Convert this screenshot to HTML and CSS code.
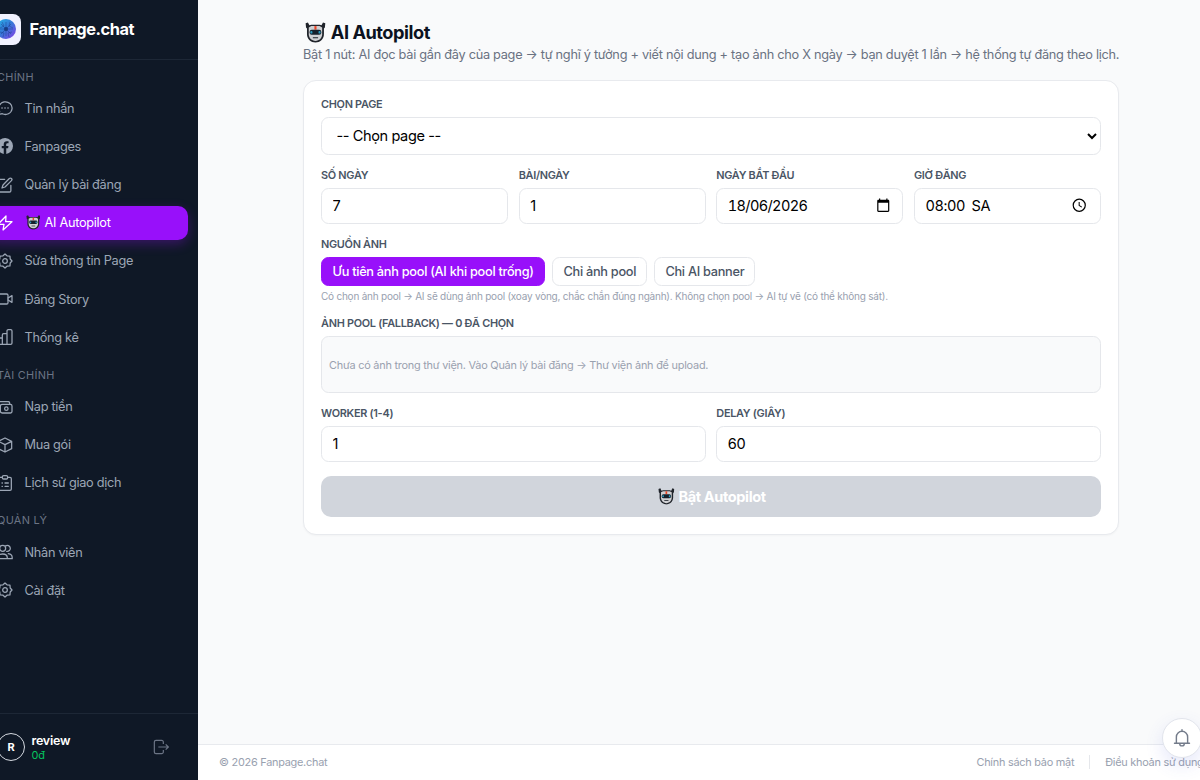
FILE: index.html
```html
<!DOCTYPE html>
<html lang="vi">
<head>
    <meta charset="UTF-8">
    <meta name="viewport" content="width=device-width, initial-scale=1.0">
    <title>AI Autopilot - Fanpage.chat</title>
    <link rel="stylesheet" href="styles.css">
</head>
<body>
    <svg class="sprite" width="0" height="0">
        <symbol id="robot" viewBox="0 0 20 20">
            <path d="M.6 1.200 2.800.4l1.400 2.800L6 2.600h8l1.800.6L17.200.4l2.200.8-.4 4-.9 1v5.600c0 4.500-3.800 7.900-8.100 7.900s-8.100-3.400-8.100-7.900V6.200l-.9-1z" fill="#20242b"/>
            <path d="M3.600 5.200 6 3.900h8l2.400 1.300v6.600c0 3.600-2.800 6.300-6.400 6.300s-6.400-2.700-6.400-6.300z" fill="#cfd0d3"/>
            <path d="M9 3.900h2v3.400H9z" fill="#ef4423"/>
            <rect x="4.400" y="7.500" width="11.200" height="4.800" rx="2" fill="#16212c"/>
            <rect x="5.100" y="8.700" width="2" height="2.400" rx=".8" fill="#2b9cc0"/>
            <rect x="12.900" y="8.700" width="2" height="2.400" rx=".8" fill="#2b9cc0"/>
            <path d="M7.500 15h5" stroke="#41464e" stroke-width="1.200"/>
        </symbol>
        <symbol id="gear" viewBox="0 0 24 24">
            <path d="m12 1.500 3 2.700 4.400.4.400 4.400 2.700 3-2.700 3-.4 4.400-4.400.4-3 2.700-3-2.700-4.400-.4-.4-4.400-2.700-3 2.700-3 .4-4.400L9 4.200z"/>
            <circle cx="12" cy="12" r="3.500"/>
        </symbol>
    </svg>

    <div class="app">
        <aside class="sidebar">
            <div class="brand">
                <div class="brand-logo">
                    <svg viewBox="0 0 20 20">
                        <defs>
                            <linearGradient id="globe" x1="0" y1="0" x2="1" y2="1">
                                <stop offset="0" stop-color="#25b5e8"/>
                                <stop offset=".5" stop-color="#3777d8"/>
                                <stop offset="1" stop-color="#8a3ee8"/>
                            </linearGradient>
                        </defs>
                        <circle cx="10" cy="10" r="10" fill="url(#globe)"/>
                        <path d="M10 3v14M3 10h14M5 5l10 10M15 5 5 15M6 3l2 4-4 2M14 3l-1 4 4 2M4 13l4 1-1 4M16 13l-4 1 1 4" stroke="#1b3f8f" stroke-width=".8" fill="none" opacity=".6"/>
                        <circle cx="10" cy="10" r="2" fill="#173d85"/>
                    </svg>
                </div>
                <span class="brand-name">Fanpage.chat</span>
            </div>

            <nav class="menu">
                <div class="menu-title">CHÍNH</div>
                <a href="#" class="menu-item">
                    <svg viewBox="0 0 24 24"><path d="M3 21.500 4 17A10 9.500 0 1 1 8 20.600z"/><path d="M7.500 12h.1M12 12h.1M16.500 12h.1" stroke-width="2.400"/></svg>
                    <span>Tin nhắn</span>
                </a>
                <a href="#" class="menu-item">
                    <svg viewBox="0 0 24 24"><path class="solid" d="M24 12a12 12 0 1 0-13.900 11.900v-8.400h-3V12h3V9.400c0-3 1.800-4.700 4.500-4.700 1.300 0 2.700.2 2.700.2v3h-1.500c-1.500 0-2 .9-2 1.900V12h3.400l-.5 3.500h-2.800v8.400A12 12 0 0 0 24 12z"/></svg>
                    <span>Fanpages</span>
                </a>
                <a href="#" class="menu-item">
                    <svg viewBox="0 0 24 24"><path d="M11.500 3.500H3.800A2 2 0 0 0 1.800 5.500v15a2 2 0 0 0 2 2h15a2 2 0 0 0 2-2v-8"/><path d="M18.500 2.200a2.200 2.200 0 0 1 3.200 3.200L12 15l-4.500 1.500L9 12z"/></svg>
                    <span>Quản lý bài đăng</span>
                </a>
                <a href="#" class="menu-item active">
                    <svg viewBox="0 0 24 24"><path d="M13.500 1.500 1.500 14h9l-1.500 8.500L22.500 10h-9.500z"/></svg>
                    <span><svg class="robot"><use href="#robot"/></svg> AI Autopilot</span>
                </a>
                <a href="#" class="menu-item">
                    <svg viewBox="0 0 24 24"><use href="#gear"/></svg>
                    <span>Sửa thông tin Page</span>
                </a>
                <a href="#" class="menu-item">
                    <svg viewBox="0 0 24 24"><rect x="0" y="4.500" width="16.500" height="15" rx="2"/><path d="m16.500 10.500 6-3.500v10l-6-3.500"/></svg>
                    <span>Đăng Story</span>
                </a>
                <a href="#" class="menu-item">
                    <svg viewBox="0 0 24 24"><path d="M1 13.500h7V23H1zM8 9a2 2 0 0 1 2-2h5v16H8zM15 3a2 2 0 0 1 2-2h3.500a2 2 0 0 1 2 2v18a2 2 0 0 1-2 2H15z"/></svg>
                    <span>Thống kê</span>
                </a>

                <div class="menu-title">TÀI CHÍNH</div>
                <a href="#" class="menu-item">
                    <svg viewBox="0 0 24 24"><path d="M17 4H2a2 2 0 0 0-2 2v8a2 2 0 0 0 2 2h3M5 16v-5a3 3 0 0 1 3-3h12a2.500 2.500 0 0 1 2.500 2.500v8A2.500 2.500 0 0 1 20 21H8a3 3 0 0 1-3-3z"/><circle cx="14" cy="14.500" r="2.600"/><path d="M17 4a2 2 0 0 1 2 2v2"/></svg>
                    <span>Nạp tiền</span>
                </a>
                <a href="#" class="menu-item">
                    <svg viewBox="0 0 24 24"><path d="m12 1.500 10 5v11l-10 5-10-5v-11zM2 6.500l10 5 10-5M12 11.500v11"/></svg>
                    <span>Mua gói</span>
                </a>
                <a href="#" class="menu-item">
                    <svg viewBox="0 0 24 24"><path d="M8 3.500H4.500a2 2 0 0 0-2 2V21a2 2 0 0 0 2 2h15a2 2 0 0 0 2-2V5.500a2 2 0 0 0-2-2H16"/><rect x="8" y="1" width="8" height="5" rx="2"/><path d="M7.500 12h.6M12 12h5M7.500 17h.6M12 17h5"/></svg>
                    <span>Lịch sử giao dịch</span>
                </a>

                <div class="menu-title">QUẢN LÝ</div>
                <a href="#" class="menu-item">
                    <svg viewBox="0 0 24 24"><circle cx="8.500" cy="6.500" r="4.500"/><path d="M13 2.800a4.500 4.500 0 1 1 1.500 8.200M1 22v-1c0-4 3-6 7.500-6s7 2 7 6v1zM17 14.500c3.500.5 5.800 2.500 5.800 6V22h-7"/></svg>
                    <span>Nhân viên</span>
                </a>
                <a href="#" class="menu-item">
                    <svg viewBox="0 0 24 24"><use href="#gear"/></svg>
                    <span>Cài đặt</span>
                </a>
            </nav>

            <div class="account">
                <div class="avatar">R</div>
                <div class="account-info">
                    <div class="account-name">review</div>
                    <div class="account-balance">0đ</div>
                </div>
                <svg class="logout" viewBox="0 0 24 24"><path d="M15.500 7.500V4.500a2.500 2.500 0 0 0-2.500-2.500H4.500A2.500 2.500 0 0 0 2 4.500v15A2.500 2.500 0 0 0 4.500 22H13a2.500 2.500 0 0 0 2.500-2.500v-3M8 12h14.500M19 8l4 4-4 4"/></svg>
            </div>
        </aside>

        <div class="main">
            <main class="content">
                <h1><svg class="robot"><use href="#robot"/></svg> AI Autopilot</h1>
                <p class="subtitle">Bật 1 nút: AI đọc bài gần đây của page → tự nghĩ ý tưởng + viết nội dung + tạo ảnh cho X ngày → bạn duyệt 1 lần → hệ thống tự đăng theo lịch.</p>

                <form class="card">
                    <div class="field">
                        <label for="page">CHỌN PAGE</label>
                        <select id="page">
                            <option>-- Chọn page --</option>
                        </select>
                    </div>

                    <div class="row four">
                        <div class="field">
                            <label for="days">SỐ NGÀY</label>
                            <input type="text" id="days" value="7">
                        </div>
                        <div class="field">
                            <label for="posts">BÀI/NGÀY</label>
                            <input type="text" id="posts" value="1">
                        </div>
                        <div class="field">
                            <label for="start">NGÀY BẮT ĐẦU</label>
                            <div class="picker">
                                <input type="text" id="start" value="18/06/2026">
                                <svg viewBox="0 0 24 24"><path d="M20 3h-1V1h-2v2H7V1H5v2H4c-1.100 0-2 .9-2 2v16c0 1.100.9 2 2 2h16c1.100 0 2-.9 2-2V5c0-1.100-.9-2-2-2zm0 18H4V8h16v13z"/></svg>
                            </div>
                        </div>
                        <div class="field">
                            <label for="time">GIỜ ĐĂNG</label>
                            <div class="picker time">
                                <input type="text" id="time" value="08:00 SA">
                                <svg viewBox="0 0 24 24"><path d="M12 1a11 11 0 1 0 0 22 11 11 0 0 0 0-22zm0 20a9 9 0 1 1 0-18 9 9 0 0 1 0 18zM12.700 6.500H11v6.200l4.800 3 .9-1.400-4-2.400z"/></svg>
                            </div>
                        </div>
                    </div>

                    <div class="field">
                        <label>NGUỒN ẢNH</label>
                        <div class="options">
                            <button type="button" class="option selected">Ưu tiên ảnh pool (AI khi pool trống)</button>
                            <button type="button" class="option">Chỉ ảnh pool</button>
                            <button type="button" class="option">Chỉ AI banner</button>
                        </div>
                        <p class="hint">Có chọn ảnh pool → AI sẽ dùng ảnh pool (xoay vòng, chắc chắn đúng ngành). Không chọn pool → AI tự vẽ (có thể không sát).</p>
                    </div>

                    <div class="field">
                        <label>ẢNH POOL (FALLBACK) — 0 ĐÃ CHỌN</label>
                        <div class="pool">Chưa có ảnh trong thư viện. Vào Quản lý bài đăng → Thư viện ảnh để upload.</div>
                    </div>

                    <div class="row two">
                        <div class="field">
                            <label for="worker">WORKER (1-4)</label>
                            <input type="text" id="worker" value="1">
                        </div>
                        <div class="field">
                            <label for="delay">DELAY (GIÂY)</label>
                            <input type="text" id="delay" value="60">
                        </div>
                    </div>

                    <button type="submit" class="submit-btn" disabled><svg class="robot"><use href="#robot"/></svg> Bật Autopilot</button>
                </form>
            </main>

            <footer class="footer">
                <span>© 2026 Fanpage.chat</span>
                <div class="footer-links">
                    <a href="#">Chính sách bảo mật</a>
                    <a href="#">Điều khoản sử dụng</a>
                </div>
            </footer>
        </div>
    </div>

    <button class="bell">
        <svg viewBox="0 0 24 24"><path d="M2 19h20M4.500 19v-8.500a7.500 7.500 0 0 1 15 0V19M12 3V1M9 19.500a3 3 0 0 0 6 0"/></svg>
    </button>
</body>
</html>
```
FILE: styles.css
```css
* {
    margin: 0;
    padding: 0;
    box-sizing: border-box;
}

body {
    font-family: Inter, "Noto Sans", sans-serif;
    background: #f9fafb;
    height: 100vh;
    overflow: hidden;
}

a {
    color: inherit;
    text-decoration: none;
}

button, input, select {
    font-family: inherit;
}

.sprite {
    position: absolute;
}

/* the shell is wider than the window and starts left of it */
.app {
    display: flex;
    width: 1248px;
    height: 780px;
    margin-left: -24px;
}

.sidebar {
    width: 222px;
    flex-shrink: 0;
    background: #0f1826;
    display: flex;
    flex-direction: column;
}

.brand {
    height: 59.5px;
    padding: 0 14px;
    border-bottom: 1px solid #1d2736;
    display: flex;
    align-items: center;
    gap: 8.5px;
    flex-shrink: 0;
}

.brand-logo {
    width: 31px;
    height: 31px;
    border-radius: 8px;
    background: #f1f2ff;
    display: flex;
    align-items: center;
    justify-content: center;
}

.brand-logo svg {
    width: 20px;
    height: 20px;
}

.brand-name {
    color: #fff;
    font-size: 16.4px;
    font-weight: 700;
    letter-spacing: -0.028em;
}

.menu {
    flex: 1;
    padding: 0 10.5px;
}

.menu-title {
    height: 31.6px;
    padding: 9px 10.5px 0;
    color: #6b7485;
    font-size: 10.9px;
    line-height: 16px;
    letter-spacing: 0.3px;
}

.menu-item + .menu-title {
    height: 31px;
    padding-top: 8.5px;
}

.menu-item {
    height: 34.2px;
    margin-bottom: 4px;
    padding: 0 10.5px;
    border-radius: 10px;
    display: flex;
    align-items: center;
    gap: 11.5px;
    color: #9ca6b5;
    font-size: 12.75px;
    letter-spacing: -0.024em;
}

.menu-item > svg {
    width: 16px;
    height: 16px;
    flex-shrink: 0;
    fill: none;
    stroke: currentColor;
    stroke-width: 1.9;
    stroke-linecap: round;
    stroke-linejoin: round;
}

.menu-item .solid {
    fill: currentColor;
    stroke: none;
}

.menu-item.active {
    color: #fff;
    background: #9810fa;
    box-shadow: 0 4px 12px rgba(152, 16, 250, 0.3);
}

.robot {
    width: 1.15em;
    height: 1.15em;
    margin: 0 0.07em 0 0.1em;
    vertical-align: -0.22em;
}

.account {
    height: 67px;
    border-top: 1px solid #1d2736;
    padding: 0 29px 0 21px;
    display: flex;
    align-items: center;
    gap: 6.5px;
}

.avatar {
    width: 28px;
    height: 28px;
    border: 1px solid #d5d9e0;
    border-radius: 50%;
    color: #fff;
    font-size: 11px;
    font-weight: 700;
    display: flex;
    align-items: center;
    justify-content: center;
}

.account-info {
    flex: 1;
    padding-top: 1.5px;
    line-height: 15px;
}

.account-name {
    color: #fff;
    font-size: 12.5px;
    font-weight: 600;
    letter-spacing: -0.02em;
}

.account-balance {
    color: #05c55f;
    font-size: 10.9px;
    letter-spacing: -0.02em;
}

.logout {
    width: 16px;
    height: 16px;
    fill: none;
    stroke: #6b7485;
    stroke-width: 1.8;
}

.main {
    flex: 1;
    display: flex;
    flex-direction: column;
    min-width: 0;
}

.content {
    flex: 1;
    width: 816px;
    margin: 0 auto;
    padding-top: 20px;
}

h1 {
    color: #0b1220;
    font-size: 18.2px;
    line-height: 25.5px;
    font-weight: 700;
    letter-spacing: -0.026em;
}

.subtitle {
    color: #6a7282;
    font-size: 12.75px;
    line-height: 18px;
    letter-spacing: -0.022em;
    white-space: nowrap;
}

.card {
    margin-top: 16.5px;
    padding: 16px 17px 17px;
    background: #fff;
    border: 1px solid #e8eaee;
    border-radius: 13px;
    box-shadow: 0 1px 2px rgba(0, 0, 0, 0.03);
    display: flex;
    flex-direction: column;
    gap: 13px;
}

label {
    display: block;
    color: #4a5565;
    font-size: 10.9px;
    font-weight: 600;
    line-height: 15px;
    letter-spacing: -0.026em;
    margin-bottom: 5px;
}

.row {
    display: grid;
    gap: 10.6px;
}

.row.four {
    grid-template-columns: repeat(4, 1fr);
}

.row.two {
    grid-template-columns: repeat(2, 1fr);
}

input,
select {
    display: block;
    width: 100%;
    height: 35.5px;
    padding: 0 10.5px;
    border: 1px solid #e5e7eb;
    border-radius: 7.5px;
    background: #fff;
    color: #000;
    font-size: 14.56px;
    letter-spacing: -0.027em;
}

select {
    height: 38px;
}

.picker {
    position: relative;
}

.picker input {
    font-variant-numeric: tabular-nums;
    letter-spacing: -0.65px;
}

.picker.time input {
    letter-spacing: -0.4px;
    word-spacing: 3px;
}

.picker svg {
    position: absolute;
    right: 12.5px;
    top: 10px;
    width: 14.5px;
    height: 14.5px;
}

.picker.time svg {
    right: 14.5px;
}

.options {
    display: flex;
    gap: 7.2px;
}

.option {
    height: 29.5px;
    padding: 0 10px;
    border: 1px solid #e5e7eb;
    border-radius: 7.5px;
    background: #fff;
    color: #4a5565;
    font-size: 12.75px;
    font-weight: 500;
    letter-spacing: -0.022em;
}

.option.selected {
    padding: 0 10.5px;
    background: #9810fa;
    border-color: #9810fa;
    color: #fff;
}

.hint {
    margin-top: 3px;
    color: #99a1af;
    font-size: 10px;
    line-height: 14px;
    letter-spacing: -0.0225em;
}

.pool {
    height: 57.3px;
    padding: 0 7px;
    border: 1px solid #e5e7eb;
    border-radius: 7.5px;
    background: #f9fafb;
    color: #99a1af;
    font-size: 10.9px;
    letter-spacing: -0.021em;
    display: flex;
    align-items: center;
}

.submit-btn {
    height: 41.5px;
    margin-top: 1px;
    border: none;
    border-radius: 10px;
    background: #d1d5dc;
    color: #fff;
    font-size: 14.56px;
    font-weight: 700;
    letter-spacing: -0.027em;
}

.footer {
    height: 36px;
    padding: 0 20.5px 1.5px 21px;
    background: #fff;
    border-top: 1px solid #e8eaee;
    color: #99a1af;
    font-size: 10.9px;
    letter-spacing: -0.023em;
    display: flex;
    align-items: center;
    justify-content: space-between;
}

.footer-links {
    display: flex;
    align-items: center;
}

.footer-links a + a {
    margin-left: 15px;
    padding-left: 15px;
    border-left: 1px solid #e5e7eb;
}

.bell {
    position: absolute;
    left: 1162px;
    top: 718px;
    width: 40px;
    height: 40px;
    border: 1px solid #e2e5ec;
    border-radius: 50%;
    background: #fff;
    box-shadow: 0 7px 18px rgba(80, 90, 220, 0.14);
    display: flex;
    align-items: center;
    justify-content: center;
}

.bell svg {
    width: 18px;
    height: 18px;
    flex-shrink: 0;
    fill: none;
    stroke: #737b8a;
    stroke-width: 1.9;
    stroke-linecap: round;
}
```
